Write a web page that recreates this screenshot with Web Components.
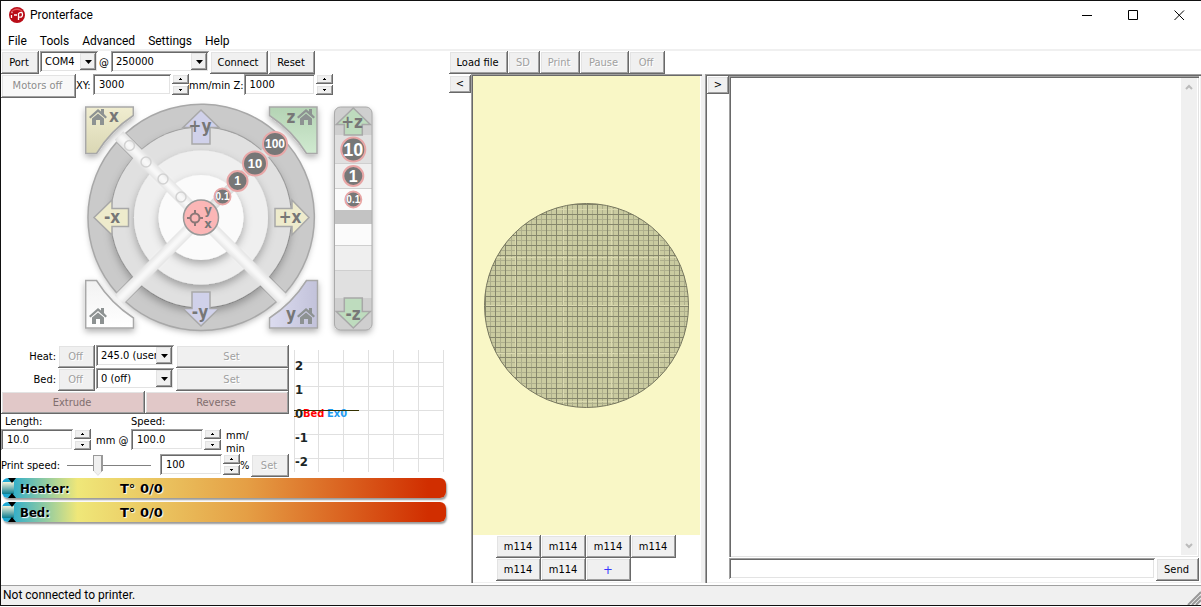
<!DOCTYPE html>
<html lang="en">
<head>
<meta charset="utf-8">
<title>Pronterface</title>
<style>
  html, body { margin: 0; height: 100%; background: #fff; }
  body { font: 11px/14px "DejaVu Sans Condensed", "DejaVu Sans", sans-serif; color: #000; }
</style>
</head>
<body>
<pronter-window></pronter-window>

<script>
/* Shared control styles, included in every shadow root. */
const CONTROLS = `
  * { box-sizing: border-box; }
  :host { display: block; box-sizing: border-box; }
  button, input, select, textarea { font: inherit; color: inherit; margin: 0; border: 0; border-radius: 0; outline: 0; }
  button {
    height: 23px; padding: 0 2px 0 0; flex: none; background: #f0f0f0; white-space: nowrap;
    box-shadow: inset -1px -1px #696969, inset 1px 1px #fff, inset -2px -2px #a0a0a0, inset 2px 2px #e3e3e3;
  }
  button:disabled { color: #a0a0a0; text-shadow: 1px 1px #fff; }
  .field, textarea {
    background: #fff;
    box-shadow: inset 1px 1px #a0a0a0, inset -1px -1px #fff, inset 2px 2px #696969, inset -2px -2px #e3e3e3;
  }
  input.field { height: 21px; padding: 0 6px; min-width: 0; }
  .row { display: flex; align-items: flex-start; }
  label, .unit { white-space: nowrap; flex: none; }
  svg { display: block; }
`;

function define(name, css, html, setup) {
  const template = document.createElement('template');
  template.innerHTML = `<style>${CONTROLS}${css}</style>${html}`;
  customElements.define(name, class extends HTMLElement {
    constructor() {
      super();
      this.attachShadow({ mode: 'open' }).append(template.content.cloneNode(true));
    }
    connectedCallback() { if (setup) setup(this.shadowRoot, this); }
  });
}

const combo = (id, value, width, label = '') => `
  <span class="combo" style="width:${width}px">
    <select class="field" id="${id}" ${label ? `aria-label="${label}"` : ''}><option>${value}</option></select>
    <span class="drop"><svg width="7" height="4"><path d="M0 0h7L3.5 4z"/></svg></span>
  </span>`;
const COMBO = `
  .combo { display: grid; height: 21px; flex: none; }
  .combo > * { grid-area: 1 / 1; }
  select { appearance: none; width: 100%; height: 21px; padding: 0 16px 0 5px; }
  .drop { justify-self: end; align-self: center; margin-right: 2px; width: 16px; height: 17px; display: grid; place-items: center;
    pointer-events: none; background: #f0f0f0; box-shadow: inset -1px -1px #696969, inset 1px 1px #e3e3e3, inset -2px -2px #a0a0a0; }
`;
const spin = (id, value, width, label = '') => `
  <span class="spin">
    <input class="field" id="${id}" value="${value}" style="width:${width}px" ${label ? `aria-label="${label}"` : ''}>
    <span class="steps">
      <button aria-label="Increase"><svg width="3" height="2"><path d="M1 0h1v1h1v1H0V1h1z"/></svg></button>
      <button aria-label="Decrease"><svg width="3" height="2"><path d="M0 0h3v1H2v1H1V1H0z"/></svg></button>
    </span>
  </span>`;
const SPIN = `
  .spin { display: flex; gap: 1px; flex: none; }
  .steps { display: flex; flex-direction: column; gap: 1px; width: 17px; }
  .steps button { height: 10px; padding: 0; display: grid; place-items: center; }
`;

/* Title bar and menus */
define('title-bar', `
  :host { display: flex; align-items: center; height: 28px; padding: 0 16px 0 8px; font: 12px/16px Roboto, sans-serif; }
  .name { flex: 1; margin-left: 5px; }
  .controls { display: flex; gap: 35px; }
  .controls button { background: none; box-shadow: none; padding: 0; width: 11px; height: 11px; }
`, `
  <svg width="16" height="16" viewBox="0 0 16 16" aria-hidden="true">
    <circle cx="8" cy="8" r="8" fill="#b90d18"/><path d="M2 5a7 7 0 0 1 12 0Q8 1 2 5z" fill="#e75a5e"/>
    <path d="M2.500 5.500h1M2.500 8v3M5 8h3M9.500 13V6.500Q13.500 4 13.500 7.500T9.500 10" fill="none" stroke="#fff" stroke-width="1.300"/>
  </svg>
  <span class="name"><slot></slot></span>
  <span class="controls">
    <button aria-label="Minimize"><svg width="11" height="11"><path d="M0 5.500h10" stroke="#000"/></svg></button>
    <button aria-label="Maximize"><svg width="11" height="11"><path d="M.5.5h9v9h-9z" fill="none" stroke="#000"/></svg></button>
    <button aria-label="Close"><svg width="11" height="11"><path d="M.5.5l9.500 9.500M10 .5L.5 10" stroke="#000"/></svg></button>
  </span>`);

define('menu-bar', `
  nav { display: flex; gap: 13px; height: 22px; padding: 2px 0 0 7px; border-bottom: 2px solid #f0f0f0; }
  button { background: none; box-shadow: none; padding: 0; height: 20px; font: 12px/20px Roboto, sans-serif; }
`, `<nav><button>File</button><button>Tools</button><button>Advanced</button><button>Settings</button><button>Help</button></nav>`);

/* Connection and print toolbar */
define('tool-bar', `${COMBO}
  :host { display: flex; height: 23px; }
  .connect { flex: 0 0 448px; gap: 1px; }
  .at { width: 11px; padding-top: 5px; }
`, `
  <div class="row connect">
    <button style="width:38px">Port</button>
    ${combo('port', 'COM4', 58, 'Port')}
    <label class="at" for="baud">@</label>
    ${combo('baud', '250000', 98)}
    <button style="width:58px">Connect</button>
    <button style="width:46px">Reset</button>
  </div>
  <div class="row">
    <button style="width:59px">Load file</button>
    <button style="width:32px" disabled>SD</button>
    <button style="width:40px" disabled>Print</button>
    <button style="width:49px" disabled>Pause</button>
    <button style="width:36px" disabled>Off</button>
  </div>`);

define('motion-bar', `${SPIN}
  label { padding-top: 5px; }
  label[for=xy] { width: 17px; }
  .motors { height: 24px; background: #f8f8f8; }
  .motors:disabled { color: #8c8c8c; }
`, `
  <div class="row">
    <button class="motors" style="width:75px" disabled>Motors off</button>
    <label for="xy">XY:</label>${spin('xy', '3000', 78)}
    <label for="z">mm/min Z:</label>${spin('z', '1000', 71)}
  </div>`);

/* Jog pad: XY rings with home corners, and the Z strip */
define('jog-pad', `
  text { font-family: "Liberation Sans", sans-serif; font-weight: bold; text-anchor: middle; }
  .cap { fill: #777; font: bold 18px "DejaVu Sans Condensed", sans-serif; }
  .badge circle { fill: #777; stroke: #e8a6a6; stroke-width: 2; }
  .badge text { fill: #fff; }
  .edge { stroke: #a8a8a8; stroke-width: 1.500; }
`, `
  <svg width="379" height="247" viewBox="1 98 379 247" role="img" aria-label="Jog controls">
    <defs>
      <filter id="drop" x="-20%" y="-20%" width="140%" height="150%"><feDropShadow dx="0" dy="3" stdDeviation="3" flood-opacity=".3"/></filter>
      <filter id="ring" x="-20%" y="-20%" width="140%" height="140%"><feDropShadow dx="0" dy="4" stdDeviation="4" flood-opacity=".3"/></filter>
      <filter id="soft" filterUnits="userSpaceOnUse" x="80" y="98" width="240" height="240"><feGaussianBlur stdDeviation="2"/></filter>
      <linearGradient id="yel" x2="0" y2="1"><stop stop-color="#f0edd0"/><stop offset="1" stop-color="#dad7b4"/></linearGradient>
      <linearGradient id="gre" x2="0" y2="1"><stop stop-color="#b4d3b4"/><stop offset="1" stop-color="#d0ead0"/></linearGradient>
      <linearGradient id="blu" x2="1" y2="0"><stop stop-color="#dcdcf0"/><stop offset="1" stop-color="#c2c2da"/></linearGradient>
      <linearGradient id="whi" x2="0" y2="1"><stop stop-color="#f2f2f2"/><stop offset="1" stop-color="#fff"/></linearGradient>
      <clipPath id="strip"><rect x="334.500" y="107" width="37.500" height="223" rx="6"/></clipPath>
      <g id="house" fill="#8d9292"><path d="M-9 0L0-8l3 2.500V-8h3v5L9 0 7.500 1.500 0-5l-7.500 6.500z"/><path d="M-6 1.500L0-3.500 6 1.500V8H2V3h-4v5h-4z"/></g>
    </defs>
    <g filter="url(#drop)"><circle cx="201" cy="217.500" r="112" fill="#eee"/></g>
    <g id="rings"></g>
    <g id="bands"></g>
    <g filter="url(#drop)" class="edge">
      <path d="M85.700 107H133.300V115.500A123 123 0 0 0 96.500 153.500H85.700z" fill="url(#yel)"/>
      <path d="M317 107H269.500V115.500A123 123 0 0 1 306.500 153.500H317z" fill="url(#gre)"/>
      <path d="M85.700 280.500H96.500A123 123 0 0 0 133.500 318V328H85.700z" fill="url(#whi)"/>
      <path d="M317.500 280.500H306.500A123 123 0 0 1 269.500 318V328H317.500z" fill="url(#blu)"/>
    </g>
    <use href="#house" x="98" y="117"/><use href="#house" x="306" y="117"/>
    <use href="#house" x="98" y="316"/><use href="#house" x="306" y="316"/>
    <g class="edge">
      <path d="M201 110l18 17.500h-9V144h-18V127.500h-9z" fill="#d0d1ea"/>
      <path d="M201 326l18-17.500h-9V292h-18V308.500h-9z" fill="#d0d1ea"/>
      <path d="M94 217.500l18-17.500v8.500h16.500v18H112v8.500z" fill="#eeebcc"/>
      <path d="M309 217.500l-17-17.500v8.500h-17v18h17v8.500z" fill="#eeebcc"/>
    </g>
    <g fill="none" stroke="#d2d2d2" stroke-width="1.500">
      <circle cx="129.500" cy="145.500" r="5"/><circle cx="146" cy="162" r="5"/><circle cx="163" cy="179" r="5"/><circle cx="181" cy="197" r="5"/>
    </g>
    <circle cx="201" cy="217.500" r="17.500" fill="#fbb6b6" stroke="#999" stroke-width="1.500"/>
    <g fill="none" stroke="#8b7777" stroke-width="2"><circle cx="195" cy="218" r="4.500"/><path d="M195 210v4M195 222v4M187 218h4M199 218h4"/></g>
    <g filter="url(#drop)"><rect x="334" y="107" width="38" height="223" rx="6" fill="#cfcfcf"/></g>
    <g clip-path="url(#strip)">
      <path d="M334 135h38v28h-38zM334 270h38v28h-38z" fill="#e0e0e0"/>
      <path d="M334 163h38v25h-38zM334 245h38v25h-38z" fill="#efefef"/>
      <path d="M334 188h38v22h-38zM334 224h38v21h-38z" fill="#fbfbfb"/>
      <path d="M334 210h38v14h-38z" fill="#c3c3c3"/>
      <path d="M334 163.500h38M334 188.500h38M334 245.500h38M334 270.500h38" stroke="#cfcfcf"/>
    </g>
    <rect x="334.500" y="107" width="37.500" height="223" rx="6" fill="none" stroke="#aaa"/>
    <g class="edge" fill="#bedcbe">
      <path d="M353.300 108l17 16.500h-8V135h-18V124.500h-8z"/><path d="M353.300 328l17-16.500h-8V298h-18V311.500h-8z"/>
    </g>
    <g id="caps"></g><g id="badges"></g>
  </svg>`, root => {
    const C = [201, 217.5], half = 6.25, parts = [];
    const at = (r, deg) => [C[0] + r * Math.cos(deg * Math.PI / 180), C[1] + r * Math.sin(deg * Math.PI / 180)].map(n => n.toFixed(1)).join(' ');
    const off = r => Math.asin(half / r) * 180 / Math.PI;
    for (const [r, fill] of [[90, '#e0e0e0'], [67, '#efefef'], [42.5, '#fbfbfb']])
      parts.push(`<circle cx="201" cy="217.500" r="${r}" fill="${fill}" filter="url(#ring)"/>`);
    const outer = [[-135, 45], [45, 135], [135, 225]].map(([a, b]) => {
      const R = 113, r = 90;
      return `<path class="edge" fill="#cacaca" d="M${at(R, a + off(R))}A${R} ${R} 0 0 1 ${at(R, b - off(R))}L${at(r, b - off(r))}A${r} ${r} 0 0 0 ${at(r, a + off(r))}z"/>`;
    });
    root.getElementById('rings').innerHTML = outer.join('') + parts.join('');
    const line = (r, deg, color, w, extra = '') => `<path d="M201 217.500L${at(r, deg)}" stroke="${color}" stroke-width="${w}" ${extra}/>`;
    root.getElementById('bands').innerHTML =
      [45, 135, 225].map(d => line(116, d, '#e2e2e2', 12) + line(118, d, '#fbfbfb', 7, 'filter="url(#soft)"')).join('') +
      line(92, -45, '#d8d8d8', 10) + line(92, -45, '#f4f4f4', 4, 'filter="url(#soft)"');
    root.getElementById('caps').innerHTML = [
      ['+y', 200, 132], ['-y', 200, 318], ['-x', 112, 223], ['+x', 290, 223], ['+z', 352, 128], ['-z', 353, 320],
      ['x', 114, 122], ['z', 291, 123], ['y', 291, 320], ['y', 208, 214, 13], ['x', 208, 228, 13]
    ].map(([t, x, y, s = 17]) => `<text class="cap" x="${x}" y="${y}" style="font-size:${s}px">${t}</text>`).join('');
    root.getElementById('badges').innerHTML = [
      ['100', 275, 144, 12, 12], ['10', 255, 163.5, 12, 13], ['1', 237.5, 181, 10, 12], ['0.1', 222.5, 196.5, 8, 10],
      ['10', 353.3, 149.5, 12, 18], ['1', 353.3, 176, 10, 16], ['0.1', 353.3, 199.5, 8, 10]
    ].map(([t, x, y, r, s]) => `<g class="badge"><circle cx="${x}" cy="${y}" r="${r}"/><text x="${x}" y="${y + s * .36}" font-size="${s}">${t}</text></g>`).join('');
  });

/* Heater set-points and extrusion */
define('heater-panel', `${COMBO}${SPIN}
  :host { width: 288px; flex: none; }
  .row > label.name { width: 57px; padding: 5px 2px 0 0; text-align: right; }
  .combo { margin: 0 2px 0 1px; }
  .row button.wide { flex: 1; }
  .ext button { flex: 1; background: #e1c8c8; }
  .ext button:disabled { color: #806e6e; text-shadow: none; }
  .pair { display: grid; grid-template-columns: 130px 1fr; row-gap: 1px; height: 38px; padding-top: 1px; }
  .pair label { padding-left: 4px; line-height: 13px; }
  .unit { padding: 5px 0 0 5px; }
  .two { line-height: 13px; padding-top: 0; }
  .speed { padding-top: 2px; }
  .speed label { padding-top: 5px; width: 66px; }
  input[type=range] { appearance: none; width: 84px; height: 22px; margin-right: 9px; background: linear-gradient(#808080, #808080) center / 100% 1px no-repeat; }
  input[type=range]::-webkit-slider-thumb { appearance: none; width: 10px; height: 21px; background: linear-gradient(#f0f0f0, #f0f0f0) 1px 1px / 7px 100% no-repeat, #999;
    clip-path: polygon(0 0, 100% 0, 100% 75%, 50% 100%, 0 75%); }
  .pct { width: 11px; padding: 5px 0 0; }
`, `
  <div class="row"><label class="name" for="heat">Heat:</label><button style="width:37px" disabled>Off</button>${combo('heat', '245.0 (user', 78)}<button class="wide" disabled>Set</button></div>
  <div class="row"><label class="name" for="bed">Bed:</label><button style="width:37px" disabled>Off</button>${combo('bed', '0 (off)', 78)}<button class="wide" disabled>Set</button></div>
  <div class="row ext"><button disabled>Extrude</button><button disabled>Reverse</button></div>
  <div class="pair">
    <label for="len">Length:</label><label for="spd" style="padding-left:0">Speed:</label>
    <div class="row">${spin('len', '10.0', 72)}<span class="unit">mm @</span></div>
    <div class="row">${spin('spd', '100.0', 72)}<span class="unit two">mm/<br>min</span></div>
  </div>
  <div class="row speed">
    <label for="rate">Print speed:</label><input type="range" id="rate" min="1" max="300" value="106">
    ${spin('pct', '100', 62, 'Print speed percent')}<span class="unit pct">%</span><button style="width:38px" disabled>Set</button>
  </div>`);

define('temp-graph', `text { font-weight: bold; }`, `
  <svg width="152" height="124" viewBox="293 349 152 124" role="img" aria-label="Temperature graph">
    <path d="M294.500 350v122M318.500 350v122M343.500 350v122M368.500 350v122M393.500 350v122M418.500 350v122M443.500 350v122M294 362.500h150M294 386.500h150M294 410.500h150M294 434.500h150M294 458.500h150" stroke="#e0e0e0"/>
    <g font-size="13" fill="#1a2626"><text x="295" y="370">2</text><text x="295" y="394">1</text><text x="295" y="418">0</text><text x="295" y="442">-1</text><text x="295" y="466">-2</text></g>
    <text x="303" y="417" font-size="11" fill="#f00">Bed</text><text x="327" y="417" font-size="11" fill="#1e9bf0">Ex0</text>
    <path d="M294 410.500h65" stroke="#333000"/><path d="M294 416.500h4" stroke="#8b4a00"/>
  </svg>`);

define('temp-gauge', `
  :host { display: flex; align-items: center; height: 20px; border-radius: 6px; overflow: hidden; font: bold 13px/20px "DejaVu Sans Condensed", sans-serif; text-shadow: 1px 1px 1px #fff;
    background: linear-gradient(90deg, #12a5d8, #efe779 17%, #e59f45 55%, #d12e00 96%); box-shadow: 1px 2px 2px #999; }
  .mark { width: 18px; flex: none; }
  .name { width: 100px; }
  .name, .reading { padding-top: 2px; }
  .reading { font-family: "DejaVu Sans", sans-serif; }
`, `
  <svg class="mark" width="18" height="20" aria-hidden="true">
    <defs><linearGradient id="g" x2="0" y2="1"><stop stop-color="#f4f4dc"/><stop offset="1" stop-color="#087c90"/></linearGradient></defs>
    <path d="M0 4h12v12H0z" fill="url(#g)"/><path d="M6 0h8l-4 5zM6 20h8l-4-5z"/>
  </svg>
  <span class="name"><slot></slot></span><span class="reading"><slot name="reading"></slot></span>`);

/* Bed preview with the custom command buttons */
define('bed-view', `
  :host { display: flex; width: 256px; flex: none; border-right: 3px solid #f0f0f0; }
  .fold { width: 22px; height: 18px; padding: 0; line-height: 16px; margin-top: 1px; }
  .view { flex: 1; display: flex; flex-direction: column; padding: 2px;
    box-shadow: inset 1px 1px #a0a0a0, inset 2px 2px #696969, inset -1px -1px #f0f0f0; }
  .plate { flex: 1; display: grid; place-items: center; background: #f9f7c6; }
  .commands { display: grid; grid-template-columns: repeat(4, 45px); justify-content: center; padding-right: 1px; }
  .commands button { padding: 0 1px 0 0; }
  .add { color: #3636ff; font-size: 13px; }
`, `
  <button class="fold">&lt;</button>
  <div class="view">
    <div class="plate"><svg width="205" height="205" role="img" aria-label="Print bed">
      <defs><clipPath id="disc"><circle cx="102.500" cy="102.500" r="102"/></clipPath></defs>
      <circle cx="102.500" cy="102.500" r="102" fill="#cacba0"/>
      <g id="grid" clip-path="url(#disc)" shape-rendering="crispEdges"></g>
      <circle cx="102.500" cy="102.500" r="102" fill="none" stroke="#77775f"/>
    </svg></div>
    <div class="commands">
      <button>m114</button><button>m114</button><button>m114</button><button>m114</button>
      <button>m114</button><button>m114</button><button class="add" aria-label="Add command">+</button>
    </div>
  </div>`, root => {
    let minor = '', major = '', light = '';
    for (let i = 0; i < 41; i++) {
      const p = Math.round(1 + i * 5.1) + .5, d = `M${p} 0V205M0 ${p}H205`;
      if (i % 2) minor += d; else major += d;
    }
    for (const p of [31, 79, 127, 175]) light += `M${p}.5 0V205`;
    for (const p of [6, 54, 102, 150, 198]) light += `M0 ${p}.5H205`;
    root.getElementById('grid').innerHTML = `<path d="${minor}" stroke="#aeaf8c"/><path d="${light}" stroke="#dad9af"/><path d="${major}" stroke="#85866b"/>`;
  });

/* Console log and command entry */
define('log-pane', `
  :host { display: flex; flex: 1; min-width: 0; padding: 2px; box-shadow: inset 1px 1px #a0a0a0, inset 2px 2px #696969, inset -1px -1px #f0f0f0; }
  .fold { width: 22px; height: 18px; padding: 0; line-height: 16px; }
  .column { flex: 1; min-width: 0; display: flex; flex-direction: column; gap: 1px; }
  .log { flex: 1; display: grid; grid-template-columns: 1fr 16px; padding: 2px; background: #fff;
    box-shadow: inset 1px 1px #a0a0a0, inset 2px 2px #696969, inset -1px -1px #e3e3e3; }
  textarea { resize: none; width: 100%; height: 100%; box-shadow: none; overflow: hidden; padding: 2px; }
  .scroll { background: #f0f0f0; display: flex; flex-direction: column; justify-content: space-between; align-items: center; padding: 6px 0; }
  .entry { gap: 1px; }
  .entry input { flex: 1; }
`, `
  <button class="fold">&gt;</button>
  <div class="column">
    <div class="log"><textarea aria-label="Log" readonly></textarea>
      <div class="scroll" aria-hidden="true">
        <svg width="8" height="6"><path d="M1 5l3-3 3 3" fill="none" stroke="#bbb" stroke-width="2"/></svg>
        <svg width="8" height="6"><path d="M1 1l3 3 3-3" fill="none" stroke="#bbb" stroke-width="2"/></svg>
      </div>
    </div>
    <div class="row entry"><input class="field" aria-label="Command"><button style="width:43px">Send</button></div>
  </div>`);

define('status-bar', `
  :host { display: flex; justify-content: space-between; align-items: flex-end; height: 20px; padding-left: 2px; background: #f0f0f0; border-top: 1px solid #a0a0a0; font: 12px/19px Roboto, sans-serif; }
`, `<span><slot></slot></span>
  <svg width="14" height="14" aria-hidden="true"><path d="M1 14L14 1M5 14l9-9M9 14l5-5" stroke="#999" stroke-width="2"/></svg>`);

define('pronter-window', `
  :host { display: flex; flex-direction: column; min-height: calc(100vh - 1px); border: solid #111; border-width: 1px 0 1px 1px; }
  main { flex: 1; display: flex; }
  .left { flex: 0 0 448px; }
  .heat { display: flex; gap: 4px; }
  .heat temp-graph { padding-top: 4px; }
  .gauges { display: grid; gap: 4px; padding: 1px 3px 0 1px; }
  status-bar { margin-top: 2px; }
`, `
  <title-bar>Pronterface</title-bar>
  <menu-bar></menu-bar>
  <tool-bar></tool-bar>
  <main>
    <div class="left">
      <motion-bar></motion-bar>
      <jog-pad></jog-pad>
      <div class="heat"><heater-panel></heater-panel><temp-graph></temp-graph></div>
      <div class="gauges">
        <temp-gauge>Heater:<span slot="reading">T° 0/0</span></temp-gauge>
        <temp-gauge>Bed:<span slot="reading">T° 0/0</span></temp-gauge>
      </div>
    </div>
    <bed-view></bed-view>
    <log-pane></log-pane>
  </main>
  <status-bar>Not connected to printer.</status-bar>`);
</script>
</body>
</html>
